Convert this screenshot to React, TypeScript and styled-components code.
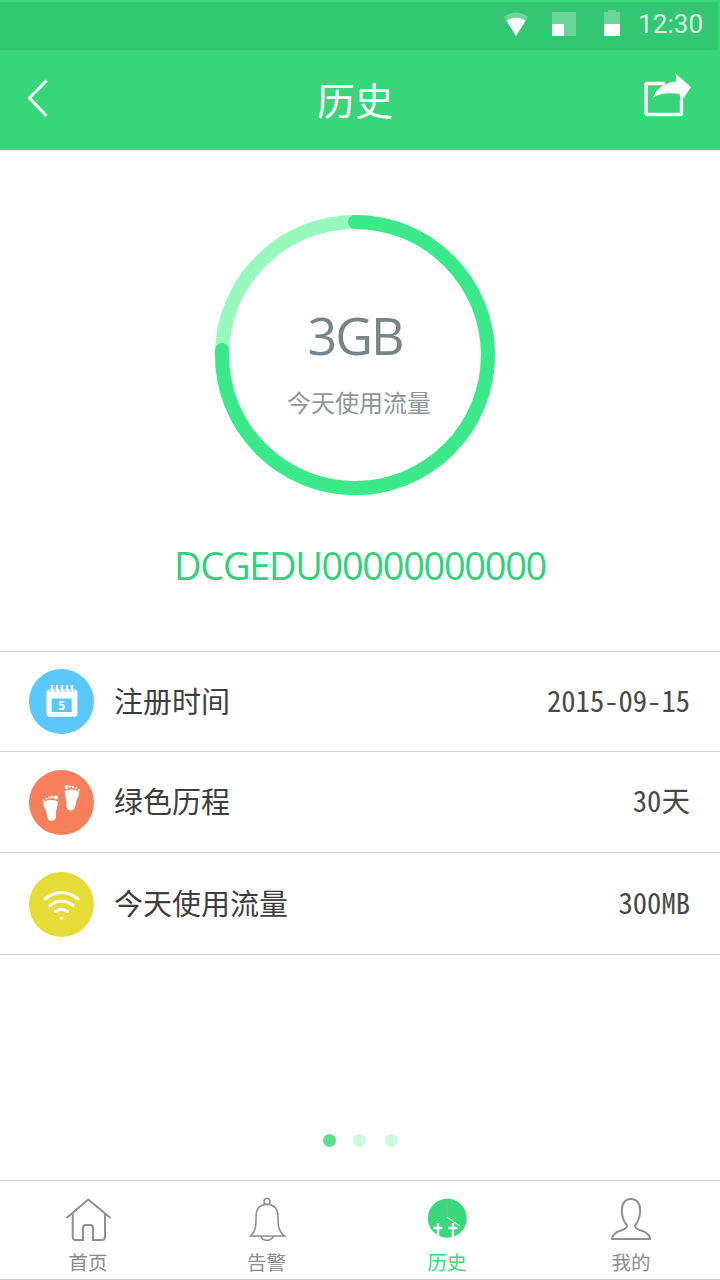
import React from "react";
import styled, { createGlobalStyle } from "styled-components";

const Global = createGlobalStyle`
  html, body { margin: 0; padding: 0; background: #fff; }
  body { font-family: "Noto Sans CJK SC", "Noto Sans", sans-serif; }
`;
const Page = styled.div`
  width: 720px; height: 1280px; display: flex; flex-direction: column; background: #fff; overflow: hidden;
`;
const Top = styled.header`
  background: #37d679; height: 150px; flex: none; display: flex; flex-direction: column;
`;
const StatusBar = styled.div`
  height: 48px; box-sizing: border-box; padding-bottom: 4px; margin: 2px 2px 0 0; background: #33c673; display: flex; align-items: center; justify-content: flex-end;
`;
const StatusIcon = styled.svg`
  display: block; flex: none; margin-right: ${p => p.$mr}px; margin-bottom: ${p => p.$mb || 0}px;
`;
const Clock = styled.span`
  font-family: Roboto, sans-serif; font-size: 26px; color: rgba(255,255,255,.82); margin-right: 15px; line-height: 1;
`;
const TitleBar = styled.div`
  height: 100px; display: flex; align-items: center; justify-content: space-between; position: relative; padding: 0 29px 4px 24px; box-sizing: border-box;
`;
const Title = styled.h1`
  position: absolute; left: 0; width: 710px; top: 25px; margin: 0; text-align: center; color: #fff; font-weight: 400; font-size: 38px; line-height: 48px;
`;
const BackIcon = styled.svg`
  display: block; margin-top: 4px;
`;
const Hero = styled.section`
  flex: none; display: flex; flex-direction: column; align-items: center; padding-top: 65px;
`;
const RingWrap = styled.div`
  width: 280px; height: 280px; position: relative; margin-right: 10px;
`;
const RingText = styled.div`
  position: absolute; inset: 0; display: flex; flex-direction: column; align-items: center;
`;
const Amount = styled.div`
  font-family: "Open Sans", sans-serif; font-size: 52px; line-height: 60px; letter-spacing: -2px; color: #788487; margin-top: 90px;
`;
const AmountLabel = styled.div`
  font-size: 24px; line-height: 32px; color: #8d9698; margin-top: 21px; margin-left: 8px;
`;
const DeviceId = styled.div`
  font-family: "Open Sans", sans-serif; font-size: 38px; line-height: 50px; letter-spacing: -1.33px; color: #2fd27a; margin-top: 45px;
`;
const List = styled.ul`
  list-style: none; margin: 61px 0 0; padding: 0; border-top: 1px solid #d2d2d2;
`;
const Row = styled.li`
  height: ${p => p.$h}px; border-bottom: 1px solid #d2d2d2; box-sizing: border-box; display: flex; align-items: center; padding: ${p => p.$pt || 0}px 30px 0 29px;
`;
const Badge = styled.div`
  width: 65px; height: 65px; border-radius: 50%; background: ${p => p.$bg}; flex: none;
  svg { display: block; }
`;
const RowLabel = styled.span`
  font-size: 29px; color: #3d3d3d; margin-left: 20px; flex: 1; line-height: 40px; margin-bottom: ${p => p.$mb}px;
`;
const RowValue = styled.span`
  font-family: "Noto Sans Mono CJK SC", "Noto Sans CJK SC", monospace; font-size: 28.6px; color: #484848; line-height: 40px; margin-bottom: ${p => p.$mb}px;
`;
const Dots = styled.div`
  margin-top: auto; margin-bottom: 33px; display: flex; align-items: center; padding-left: 323px;
`;
const Dot = styled.span`
  width: 13px; height: 13px; border-radius: 50%; background: ${p => p.$on ? "#5bdf8f" : "#ccf9e0"}; margin-right: ${p => p.$gap}px;
`;
const Nav = styled.nav`
  height: 100px; flex: none; box-sizing: border-box; border-top: 1px solid #c8c8c8; border-bottom: 1px solid #c8c8c8;
  display: grid; grid-template-columns: 176px 181px 180px 183px;
`;
const NavItem = styled.div`
  display: flex; flex-direction: column; align-items: center; padding-top: 16px; padding-left: ${p => p.$pl || 0}px;
  svg { display: block; }
`;
const NavLabel = styled.span`
  font-size: 19.5px; line-height: 26px; margin-top: 6px; color: ${p => p.$on ? "#38d87b" : "#8c8c8c"};
`;

const Back = () => (
  <BackIcon width="30" height="44" viewBox="0 0 30 44"><path d="M22.5 2.5 L5.5 20 L22.5 38" fill="none" stroke="#fff" strokeWidth="3" /></BackIcon>
);
const Share = () => (
  <svg width="50" height="48" viewBox="0 0 50 48">
    <path d="M24 9.5 H6.5 a1.5 1.5 0 0 0 -1.5 1.5 V39 a1.5 1.5 0 0 0 1.5 1.5 H39 a1.5 1.5 0 0 0 1.5 -1.5 V26" fill="none" stroke="#fff" strokeWidth="3.4" />
    <path d="M12 24 C15 14 25 8 35 7.5 L35 0 L50 13 L40 28 L38.5 20 C29 18.5 18 19 12 24 Z" fill="#fff" />
  </svg>
);
const HomeIcon = () => (
  <svg width="48" height="46" viewBox="0 0 48 46" fill="none" stroke="#8f8f8f" strokeWidth="2">
    <path d="M2.5 21 L24.3 2.5 L46.5 21" />
    <path d="M8.7 16 V40 a3 3 0 0 0 3 3 H19 V31 a3 3 0 0 1 3 -3 h4 a3 3 0 0 1 3 3 V43 H38 a3 3 0 0 0 3 -3 V16" />
  </svg>
);
const BellIcon = () => (
  <svg width="48" height="46" viewBox="0 0 48 46" fill="none" stroke="#8f8f8f" strokeWidth="1.6">
    <circle cx="24" cy="4.5" r="3" />
    <path d="M7.5 39 C13 34 13 28 13 20 C13 12 17 7.5 24 7.5 C31 7.5 35 12 35 20 C35 28 35 34 41.5 39 Z" />
    <path d="M18 39 a6 4.5 0 0 0 12 0" />
  </svg>
);
const ClockIcon = () => (
  <svg width="48" height="46" viewBox="0 0 48 46">
    <defs><clipPath id="face"><circle cx="24.3" cy="21.3" r="19.5" /></clipPath></defs>
    <circle cx="24.3" cy="21.3" r="19.5" fill="#38d87b" />
    <path d="M24.3 6 V20" stroke="#9aa" strokeWidth="1" />
    <path d="M24.3 20.5 L37 29" stroke="#fff" strokeWidth="1" />
    <g clipPath="url(#face)" stroke="#fff" strokeWidth="2.5">
      <path d="M15 26 V42 M10.5 31 H19.5 M30 26 V42 M25.5 31 H34.5" />
    </g>
  </svg>
);
const UserIcon = () => (
  <svg width="48" height="46" viewBox="0 0 48 46" fill="none" stroke="#8f8f8f" strokeWidth="2">
    <path d="M5 42 C5.5 37 9 35 14 33.5 C18 32.3 20 31 20 28.5 C17 25 15.5 21 15 16 C14 7 18 2 24 2 C30 2 34 7 33 16 C32.5 21 31 25 28 28.5 C28 31 30 32.3 34 33.5 C39 35 42.5 37 43 42 Z" />
  </svg>
);
const Calendar = () => (
  <svg width="65" height="65" viewBox="0 0 65 65">
    <rect x="17.5" y="20.5" width="31" height="27.2" rx="3.5" fill="#fff" />
    <path d="M23 16 V22 M28 16 V22 M33 16 V22 M38 16 V22 M43 16 V22" stroke="#fff" strokeWidth="2.4" />
    <path d="M20 22 H46" stroke="#5ac8fb" strokeWidth="1" strokeDasharray="2.6 2.4" />
    <rect x="22.7" y="29.5" width="20" height="13.5" fill="#5ac8fb" />
    <text x="32.7" y="41" textAnchor="middle" fontFamily="Open Sans, sans-serif" fontWeight="700" fontSize="12" fill="#fff">5</text>
  </svg>
);
const Foot = () => (
  <g fill="#fff">
    <path d="M14.5 33 C15 30 24 29 28.5 31.5 C29.5 36 26.5 40 27 44 C27.5 48 26 51 22.5 51 C18.5 51 18 46 17.5 43 C17 39 14 37 14.5 33 Z" />
    <circle cx="14.5" cy="30.5" r="1" /><circle cx="17.5" cy="28.5" r="1.1" /><circle cx="20.5" cy="27.5" r="1.2" /><circle cx="23.5" cy="27" r="1.3" /><circle cx="27" cy="27.5" r="1.9" />
  </g>
);
const Feet = () => (
  <svg width="65" height="65" viewBox="0 0 65 65">
    <Foot />
    <g transform="translate(64.5 -10.5) scale(-1 1)"><Foot /></g>
  </svg>
);
const Wifi = () => (
  <svg width="65" height="65" viewBox="0 0 65 65" fill="none" stroke="#fff" strokeWidth="3" strokeLinecap="round">
    <path d="M16 27 Q32.5 14 49 27" />
    <path d="M21 33.5 Q32.5 24.5 44 33.5" />
    <path d="M26.5 39.5 Q32.5 35 38.5 39.5" />
    <circle cx="32.5" cy="46" r="1.6" fill="#fff" stroke="none" />
  </svg>
);

const rows = [
  { h: 100, bg: "#5ac8fb", icon: <Calendar />, label: "注册时间", value: "2015-09-15", pt: 0, mb: 4 },
  { h: 101, bg: "#f77f5c", icon: <Feet />, label: "绿色历程", value: "30天", pt: 0, mb: 4 },
  { h: 102, bg: "#e5dc38", icon: <Wifi />, label: "今天使用流量", value: "300MB", pt: 2, mb: 6 },
];
const tabs = [
  { icon: <HomeIcon />, label: "首页", pl: 0 },
  { icon: <BellIcon />, label: "告警", pl: 0 },
  { icon: <ClockIcon />, label: "历史", on: true, pl: 0 },
  { icon: <UserIcon />, label: "我的", pl: 5 },
];

export default function App() {
  return (
    <Page>
      <Global />
      <Top>
        <StatusBar>
          <StatusIcon $mr={24} width="24" height="24" viewBox="0 0 24 24">
            <path d="M0 5 A18 18 0 0 1 24 5 L12 24 Z" fill="rgba(255,255,255,.28)" />
            <path d="M2.5 9 A15 15 0 0 1 21.5 9 L12 24 Z" fill="#fff" />
          </StatusIcon>
          <StatusIcon $mr={28} width="24" height="24" viewBox="0 0 24 24">
            <rect width="24" height="24" fill="rgba(255,255,255,.28)" />
            <rect y="12" width="12" height="12" fill="#fff" />
          </StatusIcon>
          <StatusIcon $mr={18} $mb={2} width="16" height="26" viewBox="0 0 16 26">
            <path d="M4 0 H12 V2 H16 V26 H0 V2 H4 Z" fill="rgba(255,255,255,.28)" />
            <rect y="14" width="16" height="12" fill="#fff" />
          </StatusIcon>
          <Clock>12:30</Clock>
        </StatusBar>
        <TitleBar>
          <Back />
          <Title>历史</Title>
          <Share />
        </TitleBar>
      </Top>
      <Hero>
        <RingWrap>
          <svg width="280" height="280" viewBox="0 0 280 280" fill="none" strokeWidth="14">
            <circle cx="140" cy="140" r="133" stroke="#99f8bd" />
            <path d="M140 7 A133 133 0 1 1 7 140 L7 135" stroke="#3ce98a" strokeLinecap="round" />
          </svg>
          <RingText>
            <Amount>3GB</Amount>
            <AmountLabel>今天使用流量</AmountLabel>
          </RingText>
        </RingWrap>
        <DeviceId>DCGEDU00000000000</DeviceId>
      </Hero>
      <List>
        {rows.map(r => (
          <Row key={r.label} $h={r.h} $pt={r.pt}>
            <Badge $bg={r.bg}>{r.icon}</Badge>
            <RowLabel $mb={r.mb}>{r.label}</RowLabel>
            <RowValue $mb={r.mb}>{r.value}</RowValue>
          </Row>
        ))}
      </List>
      <Dots>
        <Dot $on $gap={17} />
        <Dot $gap={19} />
        <Dot />
      </Dots>
      <Nav>
        {tabs.map(t => (
          <NavItem key={t.label} $pl={t.pl}>
            {t.icon}
            <NavLabel $on={t.on}>{t.label}</NavLabel>
          </NavItem>
        ))}
      </Nav>
    </Page>
  );
}
